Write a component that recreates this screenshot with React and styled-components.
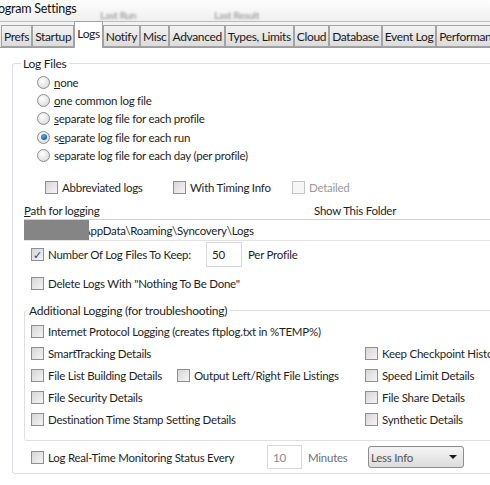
import styled, { createGlobalStyle } from 'styled-components';

const GlobalStyle = createGlobalStyle`
  html, body {
    margin: 0;
    padding: 0;
    background: #ffffff;
  }
  body {
    font-family: Lato, "Noto Sans", "Liberation Sans", sans-serif;
    font-size: 11.5px;
    letter-spacing: -0.25px;
    color: #1e1e1e;
  }
`;

const Window = styled.div`
  width: 490px;
  height: 485px;
  overflow: hidden;
  background: #ffffff;
  display: flex;
  flex-direction: column;
`;

const TitleBar = styled.div`
  height: 21px;
  display: flex;
  align-items: flex-start;
  background: linear-gradient(#fdfdfd, #f0f0f0);
  border-bottom: 1px solid #bdbdbd;
  white-space: nowrap;
`;

const Title = styled.span`
  font-size: 12.5px;
  color: #111;
  margin-left: -2px;
  margin-top: 1px;
`;

const GhostHeader = styled.span`
  margin-left: ${({ $gap }) => $gap}px;
  margin-top: 9px;
  font-size: 10px;
  color: #8a8a8a;
  filter: blur(1.3px);
`;

const TabStrip = styled.div`
  height: 25px;
  display: flex;
  align-items: flex-end;
  padding-left: 1px;
  background: linear-gradient(#f3f3f3, #e8e8e8);
  border-bottom: 1px solid #9d9d9d;
  white-space: nowrap;
`;

const Tab = styled.div`
  height: ${({ $active }) => ($active ? 23 : 20)}px;
  padding: 0 2px ${({ $active }) => ($active ? 3 : 0)}px;
  margin-bottom: ${({ $active }) => ($active ? -1 : 0)}px;
  display: flex;
  align-items: center;
  font-size: 12px;
  letter-spacing: -0.35px;
  color: #1a1a1a;
  border: 1px solid #a3a3a3;
  border-bottom: ${({ $active }) => ($active ? 'none' : '1px solid #a3a3a3')};
  background: ${({ $active }) =>
    $active ? '#ffffff' : 'linear-gradient(#f2f2f2, #dcdcdc)'};
`;

const Panel = styled.div`
  flex: 1;
  padding: 8px 0 0 12px;
  background: #ffffff;
`;

const Group = styled.fieldset`
  margin: ${({ $margin }) => $margin};
  padding: ${({ $pad }) => $pad};
  border: 1px solid #dcdfe3;
  border-radius: 3px;
  min-width: 0;
`;

const Legend = styled.legend`
  padding: 0 2px;
  margin-left: ${({ $left }) => $left}px;
  font-size: 12px;
  color: #1e1e1e;
`;

const Stack = styled.div`
  display: flex;
  flex-direction: column;
  margin-left: ${({ $left }) => $left || 0}px;
`;

const Row = styled.div`
  display: flex;
  align-items: center;
  height: ${({ $h }) => $h || 18}px;
  margin-left: ${({ $left }) => $left || 0}px;
  margin-top: ${({ $top }) => $top || 0}px;
  white-space: nowrap;
`;

const Option = styled.label`
  display: flex;
  align-items: center;
  gap: 4px;
  font-size: 11.5px;
  color: ${({ $disabled }) => ($disabled ? '#9a9a9a' : '#1e1e1e')};
  width: ${({ $w }) => ($w ? `${$w}px` : 'auto')};
  flex: none;
  white-space: nowrap;
`;

const Radio = styled.span`
  width: 11px;
  height: 11px;
  border-radius: 50%;
  border: 1px solid #8c8c8c;
  background: radial-gradient(circle at 40% 35%, #ffffff, #d2d2d2);
  display: flex;
  align-items: center;
  justify-content: center;

  &::after {
    content: '';
    display: ${({ $checked }) => ($checked ? 'block' : 'none')};
    width: 6px;
    height: 6px;
    border-radius: 50%;
    background: radial-gradient(circle at 40% 35%, #55ace6, #0e3c6e);
  }
`;

const Box = styled.span`
  width: 11px;
  height: 11px;
  flex: none;
  border: 1px solid ${({ $disabled }) => ($disabled ? '#c4c4c4' : '#8f8f8f')};
  background: ${({ $disabled }) =>
    $disabled ? '#f6f6f6' : 'linear-gradient(135deg, #d6d6d6, #f4f4f4)'};
  display: flex;
  align-items: center;
  justify-content: center;
  font-size: 11px;
  line-height: 1;
  color: #2a3a7a;
`;

const Check = ({ checked, disabled }) => (
  <Box $disabled={disabled}>{checked ? '✓' : ''}</Box>
);

const Label = styled.div`
  font-size: 11.5px;
  color: #1e1e1e;
  width: ${({ $w }) => ($w ? `${$w}px` : 'auto')};
  flex: none;
`;

const PathField = styled.div`
  display: flex;
  align-items: center;
  height: 20px;
  margin-left: 11px;
  border-top: 1px solid #cfcfcf;
  border-bottom: 1px solid #e2e2e2;
  font-size: 11.5px;
  white-space: nowrap;
`;

const Redacted = styled.span`
  width: 65px;
  height: 20px;
  flex: none;
  background: #858585;
  position: relative;
  z-index: 1;
`;

const PathText = styled.span`
  margin-left: -6px;
`;

const NumInput = styled.div`
  width: ${({ $w }) => $w}px;
  height: ${({ $h }) => $h}px;
  margin-right: 6px;
  padding-left: 5px;
  box-sizing: border-box;
  flex: none;
  display: flex;
  align-items: center;
  border: 1px solid #d8d8d8;
  color: ${({ $dim }) => ($dim ? '#8a8a8a' : '#1e1e1e')};
  font-size: 11.5px;
`;

const Dim = styled.span`
  color: #6e6e6e;
  font-size: 11.5px;
  width: 45px;
  flex: none;
`;

const LogGrid = styled.div`
  display: grid;
  grid-template-columns: 146px 188px 1fr;
  grid-auto-rows: 22px;
  align-items: center;
  margin: 2px 0 0 6px;
`;

const Cell = styled.div`
  grid-column: ${({ $col }) => $col};
  grid-row: ${({ $row }) => $row};
  white-space: nowrap;
`;

const Select = styled.div`
  width: 96px;
  height: 22px;
  margin-left: 15px;
  box-sizing: border-box;
  padding: 0 6px 0 2px;
  flex: none;
  display: flex;
  align-items: center;
  justify-content: space-between;
  border: 1px solid #8d8d8d;
  border-radius: 3px;
  background: linear-gradient(#f5f5f5, #dcdcdc);
  font-size: 11.5px;
  color: #555;
`;

const Arrow = styled.span`
  width: 0;
  height: 0;
  border-left: 4px solid transparent;
  border-right: 4px solid transparent;
  border-top: 4px solid #1a1a1a;
`;

const tabs = [
  'Prefs', 'Startup', 'Logs', 'Notify', 'Misc', 'Advanced',
  'Types, Limits', 'Cloud', 'Database', 'Event Log', 'Performance'
];

const radios = [
  { key: 'none', label: <><u>n</u>one</> },
  { key: 'common', label: <><u>o</u>ne common log file</> },
  { key: 'profile', label: <><u>s</u>eparate log file for each profile</> },
  { key: 'run', label: <>s<u>e</u>parate log file for each run</>, checked: true },
  { key: 'day', label: <>separate log file for each day (per profile)</> },
];

const extras = [
  { label: 'Internet Protocol Logging (creates ftplog.txt in %TEMP%)', col: '1 / 4', row: 1 },
  { label: 'SmartTracking Details', col: 1, row: 2 },
  { label: 'Keep Checkpoint History', col: 3, row: 2 },
  { label: 'File List Building Details', col: 1, row: 3 },
  { label: 'Output Left/Right File Listings', col: 2, row: 3 },
  { label: 'Speed Limit Details', col: 3, row: 3 },
  { label: 'File Security Details', col: 1, row: 4 },
  { label: 'File Share Details', col: 3, row: 4 },
  { label: 'Destination Time Stamp Setting Details', col: '1 / 3', row: 5 },
  { label: 'Synthetic Details', col: 3, row: 5 },
];

export default function App() {
  return (
    <Window>
      <GlobalStyle />
      <TitleBar>
        <Title>ogram Settings</Title>
        <GhostHeader $gap={24}>Last Run</GhostHeader>
        <GhostHeader $gap={78}>Last Result</GhostHeader>
      </TitleBar>

      <TabStrip>
        {tabs.map(t => (
          <Tab key={t} $active={t === 'Logs'}>{t}</Tab>
        ))}
      </TabStrip>

      <Panel>
        <Group $pad="2px 0 4px 0" $margin="0 -20px 0 0">
          <Legend $left={8}>Log Files</Legend>

          <Stack $left={24}>
            {radios.map(r => (
              <Row key={r.key} $h={18.3}>
                <Option>
                  <Radio $checked={r.checked} />
                  <span>{r.label}</span>
                </Option>
              </Row>
            ))}
          </Stack>

          <Row $left={32} $top={14}>
            <Option $w={128}><Check /><span>Abbreviated logs</span></Option>
            <Option $w={119}><Check /><span>With Timing Info</span></Option>
            <Option $disabled><Check disabled /><span>Detailed</span></Option>
          </Row>

          <Row $left={11} $top={6} $h={17}>
            <Label $w={290}><u>P</u>ath for logging</Label>
            <Label>Show This Folder</Label>
          </Row>

          <PathField>
            <Redacted />
            <PathText>AppData\Roaming\Syncovery\Logs</PathText>
          </PathField>

          <Row $left={18} $top={0} $h={26}>
            <Option $w={175}><Check checked /><span>Number Of Log Files To Keep:</span></Option>
            <NumInput $w={36} $h={25}>50</NumInput>
            <Label>Per Profile</Label>
          </Row>

          <Row $left={18} $top={3} $h={26}>
            <Option><Check /><span>Delete Logs With "Nothing To Be Done"</span></Option>
          </Row>

          <Group $pad="0 0 10px 0" $margin="7px -20px 0 11px">
            <Legend $left={2}>Additional Logging (for troubleshooting)</Legend>
            <LogGrid>
              {extras.map(e => (
                <Cell key={e.label} $col={e.col} $row={e.row}>
                  <Option><Check /><span>{e.label}</span></Option>
                </Cell>
              ))}
            </LogGrid>
          </Group>

          <Row $left={18} $top={4} $h={24}>
            <Option $w={236}><Check /><span>Log Real-Time Monitoring Status Every</span></Option>
            <NumInput $w={35} $h={24} $dim>10</NumInput>
            <Dim>Minutes</Dim>
            <Select>
              Less Info
              <Arrow />
            </Select>
          </Row>
        </Group>
      </Panel>
    </Window>
  );
}
